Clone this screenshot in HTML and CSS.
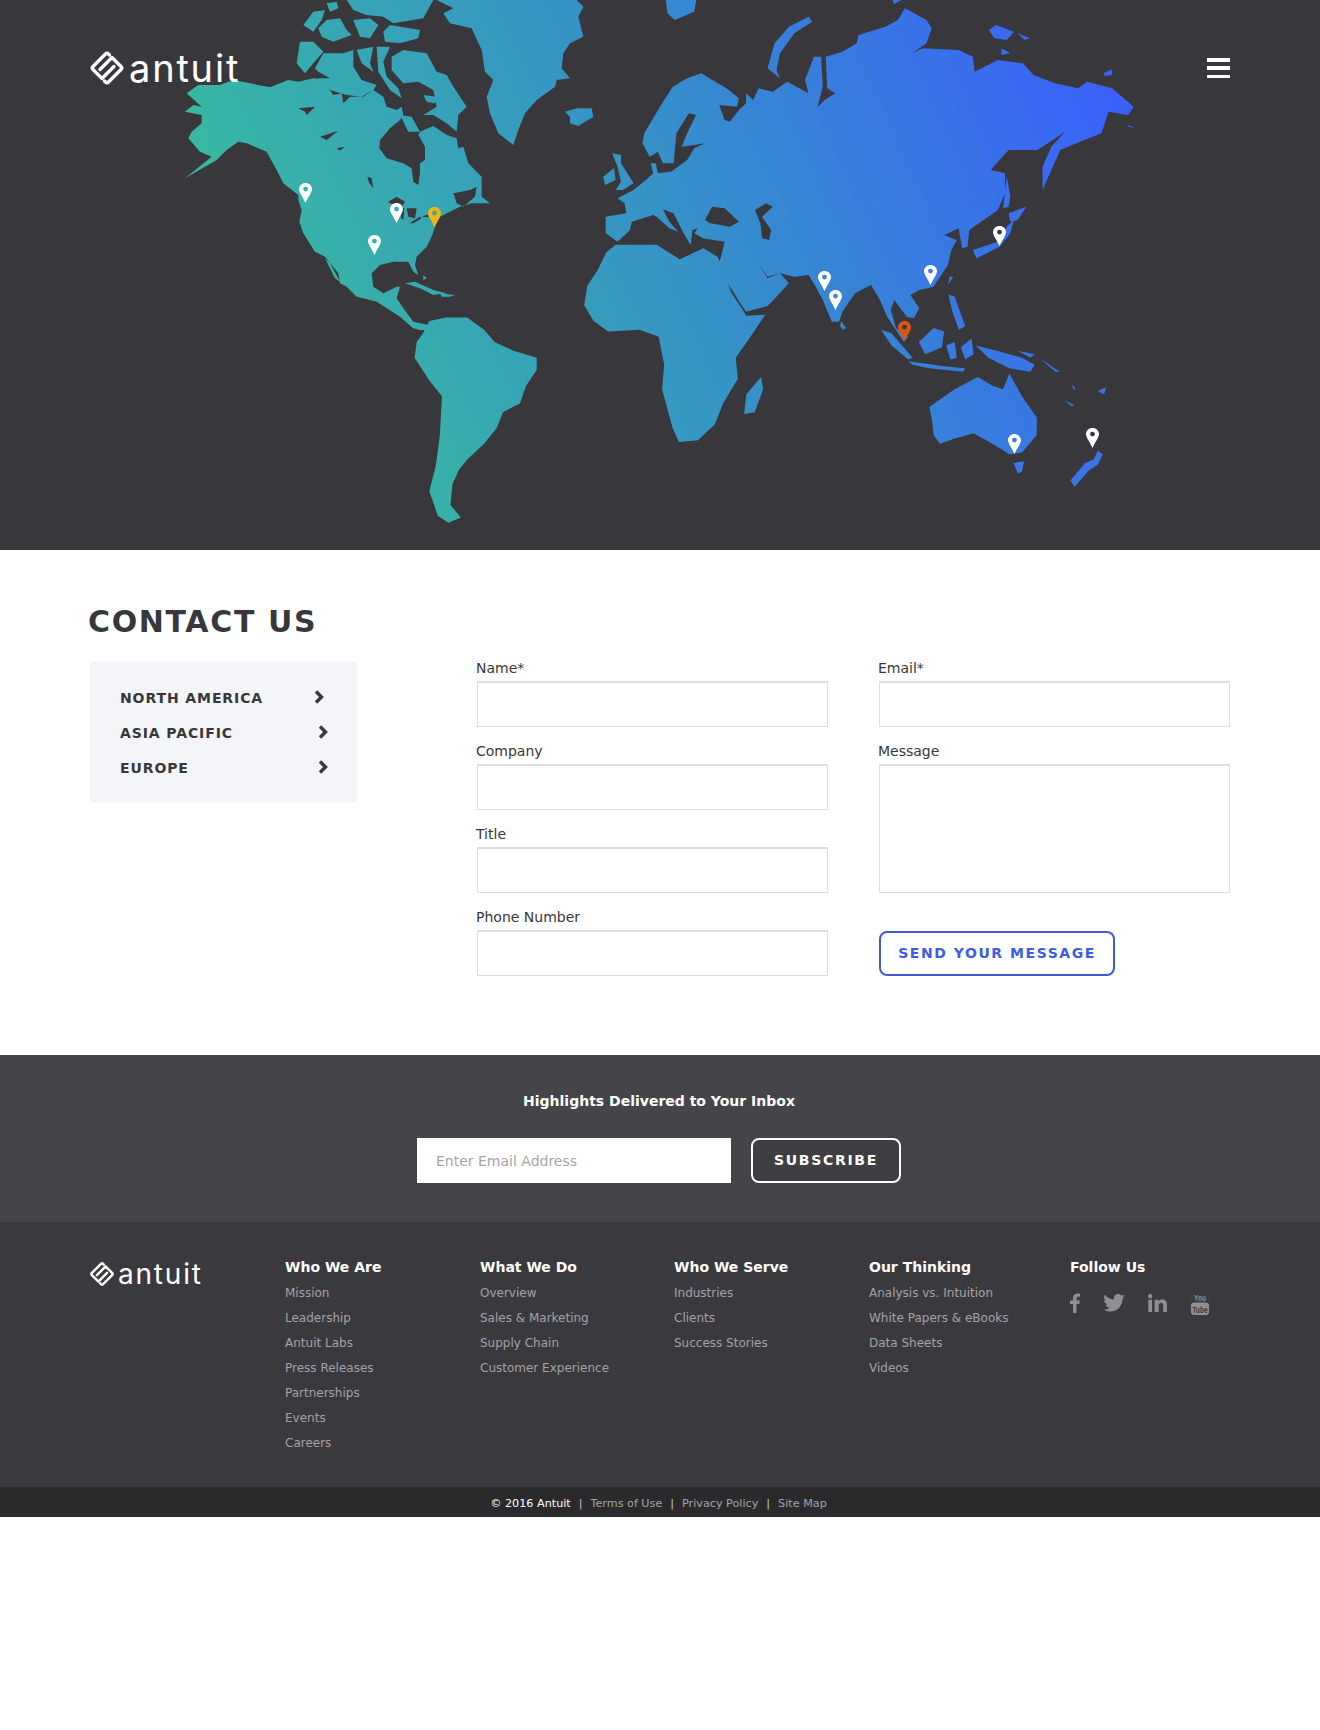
FILE: index.html
```html
<!DOCTYPE html>
<html lang="en">
<head>
<meta charset="utf-8">
<title>Contact Us - Antuit</title>
<link rel="stylesheet" href="styles.css">
</head>
<body>
<svg class="defs" width="0" height="0" aria-hidden="true">
  <defs>
    <symbol id="mark" viewBox="0 0 36 36">
      <g fill="none" stroke="currentColor" stroke-width="3.4" stroke-linecap="round" stroke-linejoin="round">
        <path d="M20.500 5 19.500 4Q18 2.500 16.500 4L4 16.500Q2.500 18 4 19.500L13 28.500 25 16.500"/>
        <path d="M15.500 31 16.500 32Q18 33.500 19.500 32L32 19.500Q33.500 18 32 16.500L23 7.500 11 19.500"/>
      </g>
    </symbol>
    <symbol id="pin" viewBox="0 0 13 20">
      <path fill="currentColor" fill-rule="evenodd" d="M6.500 0C2.900 0 0 2.700 0 6.200 0 9.500 4.500 15 6.500 20 8.500 15 13 9.500 13 6.200 13 2.700 10.100 0 6.500 0ZM6.500 3.700A2.400 2.400 0 1 1 6.500 8.500 2.400 2.400 0 1 1 6.500 3.700Z"/>
    </symbol>
    <symbol id="chev" viewBox="0 0 10 14">
      <path fill="none" stroke="currentColor" stroke-width="3.400" d="M2 1.500 7.500 7 2 12.500"/>
    </symbol>
    <linearGradient id="land" gradientUnits="userSpaceOnUse" x1="190" y1="110" x2="965" y2="-239">
      <stop offset="0" stop-color="#38b7a4"/>
      <stop offset=".45" stop-color="#3593c6"/>
      <stop offset="1" stop-color="#3b61fb"/>
    </linearGradient>
    <clipPath id="world">
      <path transform="translate(170 0) scale(.33333)" clip-rule="evenodd" d="M50,280 85,255 150,255 190,240 240,250 300,262 355,240 385,245 430,235 470,238 475,265 490,285 515,280 520,310 540,290 580,290 610,270 640,290 650,320 680,330 695,320 700,345 690,360 660,385 630,420 628,445 650,475 700,490 725,505 730,545 745,555 750,520 750,490 765,480 765,440 745,405 750,395 790,378 830,405 860,415 865,445 880,440 895,490 935,530 935,590 960,610 905,610 870,620 850,630 810,650 795,680 785,710 770,740 740,770 735,795 745,825 730,815 715,785 670,785 630,795 605,820 610,860 640,880 680,860 690,860 680,895 700,925 730,965 775,975 790,990 750,990 730,985 690,950 620,905 560,890 530,860 510,850 505,820 465,770 435,755 400,700 388,665 395,630 385,600 385,585 340,550 320,510 290,455 230,430 205,425 170,450 140,480 45,535 125,470 90,455 55,415 65,395 95,370 95,345 45,335 70,315 95,320Z M385,325 435,320 410,345 405,335Z M450,410 505,392 470,420Z M500,445 525,440 510,452Z M592,530 605,535 610,565 598,550Z M655,605 680,590 705,605 695,620 660,610Z M695,620 703,625 700,660 693,655Z M710,625 740,625 735,655 715,650Z M718,670 750,650 755,655 730,670Z M755,650 775,643 775,652Z M850,580 900,570 920,560 915,590 880,620 860,610Z"/>
      <path transform="translate(170 0) scale(.33333)" d="M665,170 700,150 770,160 800,215 830,225 850,260 890,320 865,345 860,395 830,370 790,345 760,345 800,320 790,270 745,245 700,250 665,210Z M690,345 725,350 750,395 715,395Z M435,205 460,160 520,160 550,150 550,200 575,240 620,255 610,270 575,290 530,285 480,270 445,235 480,235 445,215Z M380,190 390,125 430,125 460,155 430,190 405,220Z M560,150 610,140 600,190 610,215 575,190Z M620,140 660,140 640,185 650,230 685,265 695,295 660,270 625,215Z M400,75 430,35 465,30 455,60 430,95Z M470,10 500,5 505,25 480,35Z M445,85 470,60 510,55 530,90 545,105 490,125 455,110Z M530,0 790,0 760,55 670,70 640,50 590,45 550,30Z M660,75 750,90 745,115 690,130 645,125 640,95Z M550,60 600,55 625,75 600,115 570,110Z M760,285 800,290 795,310 770,305Z M800,0 1220,0 1240,20 1225,50 1240,110 1200,130 1180,160 1175,205 1200,235 1160,240 1155,260 1100,300 1065,340 1045,390 1030,435 985,400 960,340 950,290 970,240 945,215 935,150 905,85 840,70 820,40 850,25Z M1185,335 1220,325 1265,325 1270,350 1225,378 1200,370 1200,350Z M705,850 735,845 790,870 830,880 790,885 750,865Z M810,880 855,885 840,890 815,890Z M760,825 770,835 760,840Z M465,775 480,790 510,845 495,835Z"/>
      <path transform="scale(.42092 .35077)" d="M1020,915 1060,905 1110,905 1150,940 1175,975 1220,1000 1275,1020 1275,1055 1250,1100 1235,1150 1195,1175 1180,1220 1150,1265 1110,1310 1090,1340 1075,1380 1070,1440 1095,1475 1065,1490 1040,1470 1020,1400 1035,1330 1045,1240 1050,1130 1020,1085 985,1020 990,975 1005,950Z"/>
      <path transform="translate(580 0) scale(.35714 .33333)" clip-rule="evenodd" d="M72,650 130,640 125,610 105,595 150,570 190,535 205,520 198,490 212,490 218,520 255,515 300,480 320,445 350,430 320,435 285,440 300,400 325,345 305,340 270,400 262,490 232,490 218,455 195,470 175,430 180,400 230,310 260,260 300,235 340,220 370,240 410,265 445,295 440,320 390,315 405,360 420,365 445,330 465,310 465,280 485,300 500,265 540,275 580,245 640,280 630,240 655,170 675,170 680,260 665,322 685,300 715,280 692,265 688,170 735,155 775,130 780,105 855,80 890,60 910,25 970,60 985,85 970,130 930,160 960,145 1060,150 1100,170 1105,215 1170,180 1240,190 1270,225 1330,250 1395,265 1420,245 1490,265 1550,320 1535,345 1480,335 1460,400 1390,430 1345,450 1320,510 1295,570 1295,500 1320,440 1358,395 1310,430 1280,450 1200,450 1150,510 1190,520 1190,580 1170,630 1090,690 1085,740 1070,745 1060,685 1020,705 1055,720 1040,750 1030,795 990,860 950,870 925,885 950,925 935,955 915,950 880,900 870,930 885,985 919,1010 907,1026 860,950 840,900 815,855 770,880 735,935 725,965 705,965 680,900 660,860 640,825 600,830 560,820 525,830 500,790 525,835 560,820 585,850 550,890 525,918 465,935 452,915 385,800 395,770 405,725 345,715 320,700 330,685 315,690 310,735 290,700 262,640 232,628 250,665 275,695 250,685 215,650 205,645 145,665 140,690 105,725 72,700Z M350,660 370,620 405,625 445,665 420,680 365,670Z M490,630 520,610 540,620 510,650 535,690 530,720 510,715 505,670Z"/>
      <path transform="translate(580 0) scale(.35714 .33333)" d="M90,460 115,465 115,490 150,550 120,570 100,570 115,545 105,500Z M65,530 95,505 100,540 70,555Z M640,50 650,65 600,100 560,160 550,210 560,235 525,205 545,130 585,80Z M240,0 325,0 320,35 265,60 245,40Z M1145,90 1165,75 1215,95 1195,120 1160,115Z M1225,100 1260,115 1245,120Z M1180,145 1205,160 1180,165Z M1465,220 1490,208 1490,225 1470,228Z M875,0 900,0 880,12Z M1535,375 1555,385 1535,380Z M1100,750 1170,725 1195,680 1215,660 1205,700 1175,740 1110,775Z M1200,640 1250,620 1225,660 1205,665Z M1195,530 1205,590 1200,620 1185,625 1190,570Z M1035,830 1045,830 1030,855Z"/>
      <path transform="translate(660 0) scale(.42092 .35077)" d="M-105,698 -8,698 47,739 103,708 137,732 170,835 195,880 205,900 250,897 215,960 180,1020 185,1080 150,1150 130,1210 90,1255 45,1260 30,1220 5,1110 10,1040 -3,960 -48,940 -123,945 -158,915 -180,870 -173,815 -148,770 -128,720Z M200,1180 205,1125 240,1075 245,1110 225,1175Z M430,915 442,935 435,940 428,930Z M525,940 550,950 600,1020 590,1025 550,985Z M590,1030 680,1045 725,1050 720,1060 640,1050 600,1040Z M615,975 650,935 675,945 670,990 630,1010Z M680,985 700,975 705,1020 690,1025Z M715,990 740,965 745,1010 725,1025Z M750,985 800,1000 860,1020 890,1040 880,1060 830,1050 780,1020Z M685,840 700,845 725,930 710,940 695,890Z M640,1160 700,1110 755,1075 790,1100 815,1110 830,1065 860,1130 895,1190 895,1240 860,1290 830,1295 790,1265 745,1235 700,1250 665,1265 650,1240 645,1190Z M840,1320 865,1315 860,1345 850,1350Z M1040,1285 1052,1295 1040,1325 1020,1340 985,1388 975,1370 1010,1320 1030,1310Z M960,1140 985,1155 978,1158Z M1040,1115 1060,1105 1055,1125Z M978,1095 988,1110 982,1110Z M900,1020 950,1060 940,1060Z M850,1000 890,1010 880,1020Z"/>
    </clipPath>
  </defs>
</svg>

<header class="hero">
  <svg class="world" viewBox="0 0 1320 550" aria-hidden="true">
    <rect width="1320" height="550" fill="url(#land)" clip-path="url(#world)"/>
  </svg>
  <svg class="pin pin-white p1"><use href="#pin"/></svg>
  <svg class="pin pin-white p2"><use href="#pin"/></svg>
  <svg class="pin pin-white p3"><use href="#pin"/></svg>
  <svg class="pin pin-yellow p4"><use href="#pin"/></svg>
  <svg class="pin pin-white p5"><use href="#pin"/></svg>
  <svg class="pin pin-white p6"><use href="#pin"/></svg>
  <svg class="pin pin-white p7"><use href="#pin"/></svg>
  <svg class="pin pin-white p8"><use href="#pin"/></svg>
  <svg class="pin pin-orange p9"><use href="#pin"/></svg>
  <svg class="pin pin-white p10"><use href="#pin"/></svg>
  <svg class="pin pin-white p11"><use href="#pin"/></svg>
  <div class="topbar">
    <a class="logo" href="#"><svg class="logo-mark"><use href="#mark"/></svg><span>antuit</span></a>
    <button class="burger" aria-label="Menu"><i></i><i></i><i></i></button>
  </div>
</header>

<main class="contact">
  <h1>CONTACT US</h1>
  <div class="contact-body">
    <nav class="regions">
      <a href="#" class="r-first">NORTH AMERICA<svg class="chev"><use href="#chev"/></svg></a>
      <a href="#">ASIA PACIFIC<svg class="chev"><use href="#chev"/></svg></a>
      <a href="#">EUROPE<svg class="chev"><use href="#chev"/></svg></a>
    </nav>
    <form class="form">
      <div class="col">
        <div class="field"><label>Name*</label><input type="text"></div>
        <div class="field"><label>Company</label><input type="text"></div>
        <div class="field"><label>Title</label><input type="text"></div>
        <div class="field"><label>Phone Number</label><input type="text"></div>
      </div>
      <div class="col">
        <div class="field"><label>Email*</label><input type="text"></div>
        <div class="field"><label>Message</label><textarea></textarea></div>
        <button class="send" type="button">SEND YOUR MESSAGE</button>
      </div>
    </form>
  </div>
</main>

<section class="news">
  <h2>Highlights Delivered to Your Inbox</h2>
  <div class="news-row">
    <input type="text" placeholder="Enter Email Address">
    <button type="button">SUBSCRIBE</button>
  </div>
</section>

<footer class="foot">
  <a class="logo logo-small" href="#"><svg class="logo-mark"><use href="#mark"/></svg><span>antuit</span></a>
  <div class="fcol c1"><h3>Who We Are</h3><a href="#">Mission</a><a href="#">Leadership</a><a href="#">Antuit Labs</a><a href="#">Press Releases</a><a href="#">Partnerships</a><a href="#">Events</a><a href="#">Careers</a></div>
  <div class="fcol c2"><h3>What We Do</h3><a href="#">Overview</a><a href="#">Sales &amp; Marketing</a><a href="#">Supply Chain</a><a href="#">Customer Experience</a></div>
  <div class="fcol c3"><h3>Who We Serve</h3><a href="#">Industries</a><a href="#">Clients</a><a href="#">Success Stories</a></div>
  <div class="fcol c4"><h3>Our Thinking</h3><a href="#">Analysis vs. Intuition</a><a href="#">White Papers &amp; eBooks</a><a href="#">Data Sheets</a><a href="#">Videos</a></div>
  <div class="fcol c5"><h3>Follow Us</h3>
    <div class="social">
      <svg class="s-f" viewBox="0 0 10 20"><path fill="currentColor" d="M3 20V11H0V7.500H3V5C3 2 4.800 .5 7.300 .5 8.500 .5 9.500 .6 10 .7V3.800H8C6.800 3.800 6.500 4.400 6.500 5.300V7.500H9.800L9.300 11H6.500V20Z"/></svg>
      <svg class="s-t" viewBox="0 0 24 20"><path fill="currentColor" d="M24 2.400C23.100 2.800 22.200 3 21.200 3.200 22.200 2.600 23 1.600 23.400.400 22.400 1 21.400 1.400 20.200 1.600 19.300.6 18 0 16.600 0 13.900 0 11.700 2.200 11.700 4.900 11.700 5.300 11.700 5.700 11.800 6 7.700 5.800 4.100 3.900 1.700.9 1.200 1.700 1 2.600 1 3.500 1 5.200 1.900 6.700 3.200 7.600 2.400 7.600 1.600 7.300 1 7 1 9.400 2.700 11.400 4.900 11.800 4.100 12 3.300 12 2.700 11.900 3.300 13.900 5.100 15.300 7.300 15.300 5.600 16.600 3.500 17.400 1.200 17.400.8 17.400.4 17.400 0 17.300 2.200 18.700 4.800 19.500 7.500 19.500 16.600 19.500 21.500 12 21.500 5.500L21.500 4.900C22.500 4.200 23.300 3.300 24 2.400Z"/></svg>
      <svg class="s-in" viewBox="0 0 20 19"><path fill="currentColor" d="M.3 6.200H4.300V19H.3ZM2.300 0A2.300 2.300 0 1 1 2.300 4.600 2.300 2.300 0 1 1 2.300 0ZM7 6.200H10.800V8C11.400 6.900 12.800 5.900 14.800 5.900 19 5.900 20 8.500 20 12V19H16V12.800C16 11.200 15.900 9.300 13.800 9.300 11.600 9.300 11.200 11 11.200 12.700V19H7Z"/></svg>
      <svg class="s-y" viewBox="0 0 18 23">
        <text class="yt-you" transform="translate(9 9) scale(1 1.500)" text-anchor="middle">You</text>
        <rect y="10.500" width="18" height="12.500" rx="3" fill="currentColor"/>
        <text class="yt-tube" transform="translate(9 20.500) scale(1 1.400)" text-anchor="middle">Tube</text>
      </svg>
    </div>
  </div>
</footer>

<div class="legal">
  <span class="copy">© 2016 Antuit</span><span class="sep">|</span><a href="#">Terms of Use</a><span class="sep">|</span><a href="#">Privacy Policy</a><span class="sep">|</span><a href="#">Site Map</a>
</div>
</body>
</html>
```

FILE: styles.css
```css
* { box-sizing: border-box; }
html, body { margin: 0; padding: 0; background: #fff; }
body { font-family: "DejaVu Sans", Verdana, sans-serif; color: #38373c; min-height: 1730px; }
a { text-decoration: none; color: inherit; }
.defs { position: absolute; }

/* hero */
.hero { position: relative; height: 550px; background: #38373c; overflow: hidden; }
.world { position: absolute; left: 0; top: 0; width: 1320px; height: 550px; display: block; }
.pin { position: absolute; width: 13px; height: 20px; }
.pin-white { color: #fff; }
.pin-yellow { color: #f5b50f; }
.pin-orange { color: #d9560f; }
.p1 { left: 299px; top: 183px; }
.p2 { left: 390px; top: 203px; }
.p3 { left: 368px; top: 235px; }
.p4 { left: 428px; top: 207px; }
.p5 { left: 993px; top: 226px; }
.p6 { left: 924px; top: 265px; }
.p7 { left: 818px; top: 271px; }
.p8 { left: 829px; top: 290px; }
.p9 { left: 898px; top: 321px; }
.p10 { left: 1008px; top: 434px; }
.p11 { left: 1086px; top: 428px; }
.topbar { position: relative; display: flex; justify-content: space-between; align-items: center; padding: 50px 90px 0 89px; }
.logo { display: flex; align-items: center; gap: 4px; color: #fff; }
.logo-mark { width: 36px; height: 36px; flex: none; }
.logo span { font-family: "Inter", sans-serif; font-size: 38px; line-height: 36px; font-weight: 400; letter-spacing: 1.800px; }
.burger { width: 23px; height: 20px; padding: 0; border: 0; background: none; display: flex; flex-direction: column; justify-content: space-between; }
.burger i { display: block; height: 3.500px; background: #fff; }

/* contact */
.contact { height: 505px; padding: 54px 90px 0 88px; }
.contact h1 { margin: 0; font-size: 30px; line-height: 36px; font-weight: 700; letter-spacing: 1.65px; color: #38373c; }
.contact-body { display: flex; margin-top: 22px; margin-left: 2px; }
.regions { width: 267px; height: 140px; background: #f4f5f9; padding: 18px 0 0 30px; display: flex; flex-direction: column; flex: none; }
.regions a { display: flex; justify-content: space-between; align-items: center; height: 35px; padding-right: 29px; font-size: 14px; font-weight: 700; letter-spacing: .9px; color: #38373c; }
.regions a.r-first { padding-right: 33px; }
.chev { width: 10px; height: 14px; position: relative; top: -1px; }
.form { display: flex; gap: 50px; margin-left: 119px; margin-top: -4px; }
.col { width: 352px; display: flex; flex-direction: column; }
.field { display: flex; flex-direction: column; margin-bottom: 14px; }
.field label { font-size: 14px; line-height: 20px; margin-bottom: 3px; color: #38373c; }
.field input, .field textarea { display: block; margin: 0 0 0 1px; width: 351px; height: 46px; border: 1px solid #dfdfe2; border-top-width: 2px; background: #fff; padding: 0 10px; resize: none; outline: 0; }
.field textarea { height: 129px; }
.send { margin: 24px 0 0 1px; width: 236px; height: 45px; padding: 0 0 2px; border: 2px solid #3e5bd2; border-radius: 8px; background: #fff; color: #3d5ce0; font-family: inherit; font-size: 14px; font-weight: 700; letter-spacing: 1.55px; }

/* newsletter */
.news { height: 167px; background: #454549; padding: 36px 2px 0 0; text-align: center; color: #fff; }
.news h2 { margin: 0; font-size: 14px; line-height: 20px; font-weight: 700; }
.news-row { display: flex; justify-content: center; gap: 20px; margin-top: 27px; }
.news-row input { width: 314px; height: 45px; border: 0; background: #fff; padding: 0 19px; font-family: inherit; font-size: 14px; outline: 0; }
.news-row input::placeholder { color: #a5a5a8; opacity: 1; }
.news-row button { width: 150px; height: 45px; padding: 0 0 2px; background: #3f3e43; border: 2px solid #fff; border-radius: 8px; color: #fff; font-family: inherit; font-size: 14px; font-weight: 700; letter-spacing: 1.7px; }

/* footer */
.foot { height: 265px; background: #3a393e; padding: 36px 0 0 89px; display: flex; align-items: flex-start; }
.logo-small { width: 196px; margin-top: 3px; flex: none; gap: 3px; }
.logo-small .logo-mark { width: 26px; height: 26px; }
.logo-small span { font-size: 28px; line-height: 26px; letter-spacing: 1.800px; }
.fcol { display: flex; flex-direction: column; flex: none; font-size: 12px; color: #a3a3a8; }
.fcol h3 { margin: 0 0 5px; font-size: 14px; line-height: 18px; font-weight: 700; color: #fff; }
.fcol a { line-height: 25px; }
.c1 { width: 195px; } .c2 { width: 194px; } .c3 { width: 195px; } .c4 { width: 201px; }
.social { display: flex; align-items: center; color: #8f8f93; margin-top: 9px; height: 26px; }
.s-f { width: 10px; height: 20px; }
.s-t { width: 22px; height: 18px; margin-left: 23px; }
.s-in { width: 19px; height: 18px; margin-left: 23px; }
.s-y { width: 18px; height: 23px; margin-left: 24px; }
.yt-you { font-family: "Liberation Sans", sans-serif; font-size: 6.500px; font-weight: 700; fill: #8f8f93; }
.yt-tube { font-family: "Liberation Sans", sans-serif; font-size: 6.500px; font-weight: 700; fill: #3a393e; }

/* legal */
.legal { height: 30px; background: #2a2a2d; padding: 2px 3px 0 0; display: flex; justify-content: center; align-items: center; font-size: 11.200px; color: #a3a3a8; }
.legal .copy { color: #fff; }
.legal .sep { margin: 0 8px; color: #c8c8ca; }
```
